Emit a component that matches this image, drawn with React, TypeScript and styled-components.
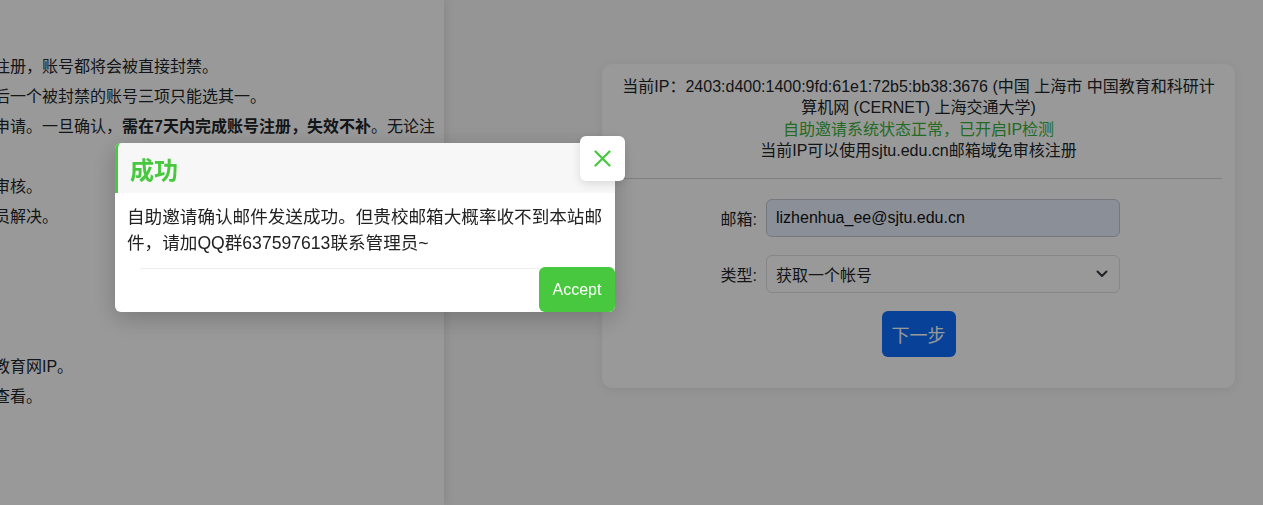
import React from "react";
import styled, { createGlobalStyle } from "styled-components";

const GREEN = "#47c83e";

const Global = createGlobalStyle`
  html, body { margin: 0; padding: 0; }
  body {
    font-family: "Liberation Sans", "Noto Sans CJK SC", sans-serif;
    color: #212529;
    background: #ffffff;
    overflow: hidden;
  }
  * { box-sizing: border-box; }
`;

const Page = styled.div`
  display: flex;
  width: 100%;
  height: 505px;
`;

const LeftPanel = styled.div`
  position: relative;
  z-index: 1;
  width: 444px;
  flex: none;
  background: #ffffff;
  overflow: hidden;
  box-shadow: 2px 0 9px rgba(0, 0, 0, 0.09);
`;

const Notes = styled.div`
  margin-left: -6px;
  padding-top: 52px;
  font-size: 16px;
  line-height: 30px;
  white-space: nowrap;
`;

const NoteLine = styled.div`
  min-height: 30px;
  b { font-weight: 700; }
`;

const RightPanel = styled.div`
  flex: 1;
  background: #f8f8f8;
  display: flex;
  align-items: flex-start;
  padding: 64px 28px 0 158px;
`;

const Card = styled.div`
  flex: 1;
  background: #ffffff;
  border-radius: 10px;
  box-shadow: 0 2px 10px rgba(0, 0, 0, 0.07);
  padding: 12px 16px 31px;
`;

const Info = styled.div`
  text-align: center;
  font-size: 16px;
  line-height: 21.3px;
`;

const InfoLine = styled.div<{ $tone?: "ok" }>`
  color: ${(p) => (p.$tone === "ok" ? "#3bb33b" : "#212529")};
`;

const Rule = styled.hr`
  border: 0;
  border-top: 1px solid #d6d6d6;
  margin: 17px -3px 20px;
`;

const Form = styled.div`
  display: flex;
  flex-direction: column;
  gap: 18px;
`;

const Field = styled.div`
  display: grid;
  grid-template-columns: 139px 354px;
  column-gap: 9px;
  align-items: center;
`;

const Label = styled.label`
  text-align: right;
  font-size: 16px;
`;

const Input = styled.div`
  height: 38px;
  border: 1px solid #c4cad2;
  border-radius: 6px;
  background: #e8f0fe;
  display: flex;
  align-items: center;
  padding: 0 9px;
  font-size: 16px;
  color: #111;
`;

const Select = styled.div`
  height: 38px;
  border: 1px solid #dee2e6;
  border-radius: 6px;
  background: #ffffff;
  display: flex;
  align-items: center;
  justify-content: space-between;
  padding: 0 11px 0 9px;
  font-size: 16px;
`;

const Actions = styled.div`
  display: flex;
  justify-content: center;
`;

const PrimaryButton = styled.button`
  height: 46px;
  padding: 0 10px;
  border: 0;
  border-radius: 6px;
  background: #0d6efd;
  color: #ffffff;
  font-family: inherit;
  font-size: 18px;
`;

const Overlay = styled.div`
  position: fixed;
  inset: 0;
  background: rgba(0, 0, 0, 0.4);
  z-index: 10;
`;

const Modal = styled.div`
  position: fixed;
  left: 115px;
  top: 143px;
  width: 500px;
  background: #ffffff;
  border-radius: 6px;
  box-shadow: 0 6px 24px rgba(0, 0, 0, 0.22);
  z-index: 20;
`;

const ModalHeader = styled.div`
  height: 50px;
  background: #f7f7f7;
  border-left: 3px solid ${GREEN};
  border-radius: 6px 0 0 0;
  display: flex;
  align-items: center;
  padding-left: 12px;
`;

const Title = styled.h3`
  margin: 0;
  font-size: 24px;
  font-weight: 700;
  color: ${GREEN};
`;

const CloseButton = styled.button`
  position: absolute;
  top: -7px;
  right: -10px;
  width: 45px;
  height: 45px;
  border: 0;
  border-radius: 6px;
  background: #ffffff;
  box-shadow: 0 3px 10px rgba(0, 0, 0, 0.12);
  display: flex;
  align-items: center;
  justify-content: center;
  padding: 0;
`;

const ModalBody = styled.div`
  padding: 11px 12px 12px;
  font-size: 17.6px;
  line-height: 26px;
  color: #222;
`;

const ModalFooter = styled.div`
  display: flex;
  height: 44px;
  padding-left: 25px;
`;

const FooterRule = styled.div`
  flex: 1;
  border-top: 1px solid #eeeeee;
`;

const AcceptButton = styled.button`
  width: 76px;
  height: 45px;
  margin-top: -1px;
  border: 0;
  border-radius: 6px;
  background: ${GREEN};
  color: #ffffff;
  font-family: "Liberation Sans", sans-serif;
  font-size: 16px;
  padding: 0;
`;

export default function App() {
  return (
    <>
      <Global />
      <Page>
        <LeftPanel>
          <Notes>
            <NoteLine>注册，账号都将会被直接封禁。</NoteLine>
            <NoteLine>后一个被封禁的账号三项只能选其一。</NoteLine>
            <NoteLine>
              申请。一旦确认，<b>需在7天内完成账号注册，失效不补</b>。无论注
            </NoteLine>
            <NoteLine />
            <NoteLine>审核。</NoteLine>
            <NoteLine>员解决。</NoteLine>
            <NoteLine />
            <NoteLine />
            <NoteLine />
            <NoteLine />
            <NoteLine>教育网IP。</NoteLine>
            <NoteLine>查看。</NoteLine>
          </Notes>
        </LeftPanel>
        <RightPanel>
          <Card>
            <Info>
              <InfoLine>
                当前IP：2403:d400:1400:9fd:61e1:72b5:bb38:3676 (中国 上海市 中国教育和科研计算机网 (CERNET) 上海交通大学)
              </InfoLine>
              <InfoLine $tone="ok">自助邀请系统状态正常，已开启IP检测</InfoLine>
              <InfoLine>当前IP可以使用sjtu.edu.cn邮箱域免审核注册</InfoLine>
            </Info>
            <Rule />
            <Form>
              <Field>
                <Label>邮箱:</Label>
                <Input>lizhenhua_ee@sjtu.edu.cn</Input>
              </Field>
              <Field>
                <Label>类型:</Label>
                <Select>
                  <span>获取一个帐号</span>
                  <svg width="12" height="8" viewBox="0 0 12 8" fill="none">
                    <path d="M1.5 1.5 6 6l4.5-4.5" stroke="#343a40" strokeWidth="2" strokeLinecap="round" strokeLinejoin="round" />
                  </svg>
                </Select>
              </Field>
              <Actions>
                <PrimaryButton>下一步</PrimaryButton>
              </Actions>
            </Form>
          </Card>
        </RightPanel>
      </Page>
      <Overlay />
      <Modal>
        <ModalHeader>
          <Title>成功</Title>
        </ModalHeader>
        <CloseButton aria-label="close">
          <svg width="17" height="17" viewBox="0 0 17 17" fill="none">
            <path d="M1.5 1.5l14 14M15.5 1.5l-14 14" stroke={GREEN} strokeWidth="2.2" strokeLinecap="round" />
          </svg>
        </CloseButton>
        <ModalBody>
          自助邀请确认邮件发送成功。但贵校邮箱大概率收不到本站邮件，请加QQ群637597613联系管理员~
        </ModalBody>
        <ModalFooter>
          <FooterRule />
          <AcceptButton>Accept</AcceptButton>
        </ModalFooter>
      </Modal>
    </>
  );
}
